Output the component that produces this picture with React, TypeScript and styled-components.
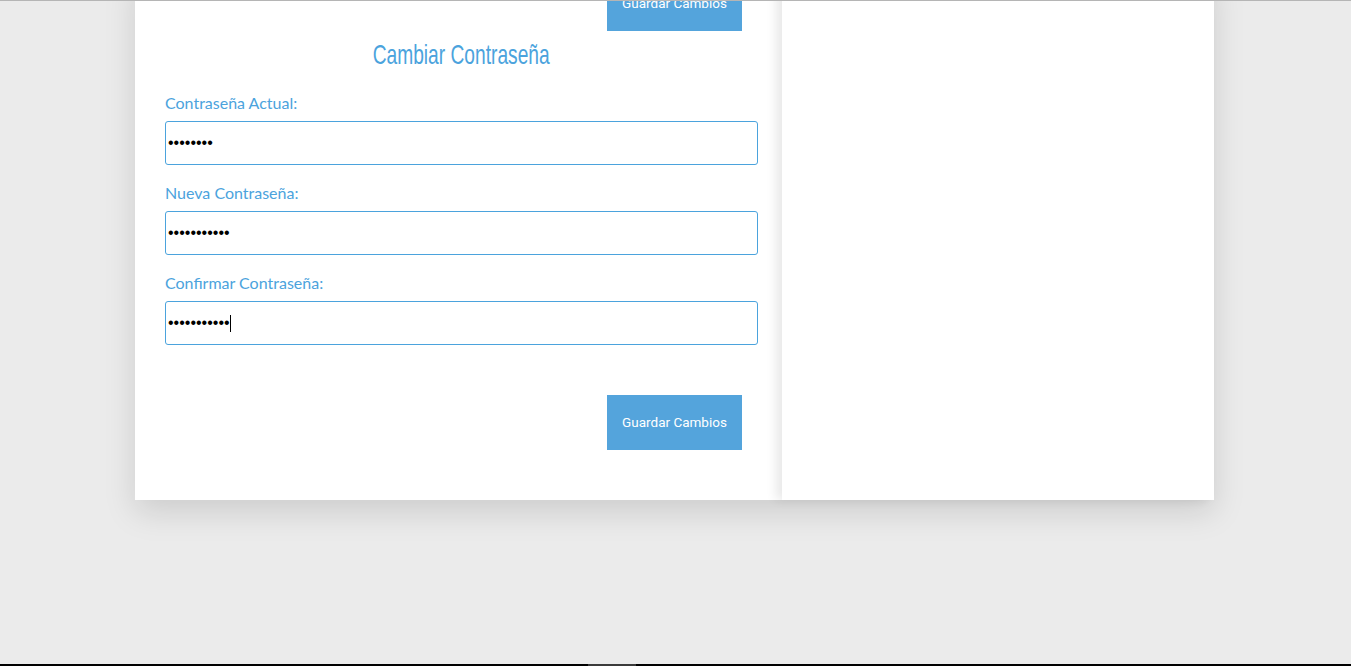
import React from "react";
import styled, { createGlobalStyle } from "styled-components";

const Global = createGlobalStyle`
  html, body {
    margin: 0;
    padding: 0;
    height: 100%;
    overflow: hidden;
  }
  body {
    background: #ebebeb;
    font-family: Lato, "Open Sans", sans-serif;
  }
`;

const Viewport = styled.div`
  position: relative;
  height: 666px;
  border-top: 1px solid #b5b5b5;
  box-sizing: border-box;
  overflow: hidden;
`;

const Card = styled.div`
  display: grid;
  grid-template-columns: 647px 432px;
  width: 1079px;
  margin: -25px 0 0 135px;
  background: #fff;
  box-shadow: 0 12px 30px rgba(0, 0, 0, 0.13);
`;

const FormColumn = styled.form`
  display: flex;
  flex-direction: column;
  padding: 0 24px 50px 30px;
  background: #fff;
`;

const SidePanel = styled.aside`
  background: #fff;
  box-shadow: -6px 0 10px rgba(0, 0, 0, 0.09);
`;

const ButtonRow = styled.div<{ $top?: number }>`
  display: flex;
  justify-content: flex-end;
  padding-right: 16px;
  margin-top: ${(p) => p.$top ?? 0}px;
`;

const SaveButton = styled.button`
  width: 135px;
  height: 55px;
  border: none;
  border-radius: 0;
  padding: 0 0 2px;
  background: #54a4dc;
  color: #fff;
  font-family: Roboto, "Liberation Sans", sans-serif;
  font-size: 13.5px;
  font-weight: 400;
  cursor: pointer;
`;

const Title = styled.h2`
  margin: 6px 0 20px;
  text-align: center;
  font-family: "Liberation Sans", Arial, sans-serif;
  font-weight: 400;
  font-size: 28px;
  line-height: 36px;
  color: #4ba3dd;
`;

const TitleText = styled.span`
  display: inline-block;
  transform: scaleX(0.685);
  white-space: nowrap;
`;

const Field = styled.div`
  display: flex;
  flex-direction: column;
  & + & {
    margin-top: 18px;
  }
`;

const Label = styled.label`
  font-family: Lato, sans-serif;
  font-size: 16px;
  line-height: 20px;
  color: #4ba3dd;
  margin-bottom: 8px;
`;

const InputWrap = styled.div`
  position: relative;
`;

const Input = styled.input`
  box-sizing: border-box;
  width: 593px;
  height: 44px;
  border: 1px solid #4ba3dd;
  border-radius: 3px;
  padding: 0 2px;
  font-family: "Liberation Sans", Arial, sans-serif;
  font-size: 16px;
  color: #000;
  background: #fff;
  outline: none;
  caret-color: transparent;
`;

const Caret = styled.span`
  position: absolute;
  top: 14px;
  width: 1px;
  height: 17px;
  background: #000;
  pointer-events: none;
`;

const BottomBar = styled.div`
  position: absolute;
  left: 0;
  right: 0;
  bottom: 0;
  height: 2px;
  background: #000;
`;

const ScrollThumb = styled.div`
  position: absolute;
  left: 588px;
  bottom: 0;
  width: 48px;
  height: 2px;
  background: #3a3a3a;
`;

export default function App() {
  return (
    <>
      <Global />
      <Viewport>
        <Card>
          <FormColumn onSubmit={(e) => e.preventDefault()}>
            <ButtonRow>
              <SaveButton type="button">Guardar Cambios</SaveButton>
            </ButtonRow>
            <Title>
              <TitleText>Cambiar Contraseña</TitleText>
            </Title>
            <Field>
              <Label htmlFor="actual">Contraseña Actual:</Label>
              <InputWrap>
                <Input id="actual" type="password" defaultValue="12345678" />
              </InputWrap>
            </Field>
            <Field>
              <Label htmlFor="nueva">Nueva Contraseña:</Label>
              <InputWrap>
                <Input id="nueva" type="password" defaultValue="12345678901" />
              </InputWrap>
            </Field>
            <Field>
              <Label htmlFor="confirmar">Confirmar Contraseña:</Label>
              <InputWrap>
                <Input id="confirmar" type="password" defaultValue="12345678901" />
                <Caret style={{ left: 230 - 165 }} />
              </InputWrap>
            </Field>
            <ButtonRow $top={50}>
              <SaveButton type="submit">Guardar Cambios</SaveButton>
            </ButtonRow>
          </FormColumn>
          <SidePanel />
        </Card>
        <BottomBar />
        <ScrollThumb />
      </Viewport>
    </>
  );
}
